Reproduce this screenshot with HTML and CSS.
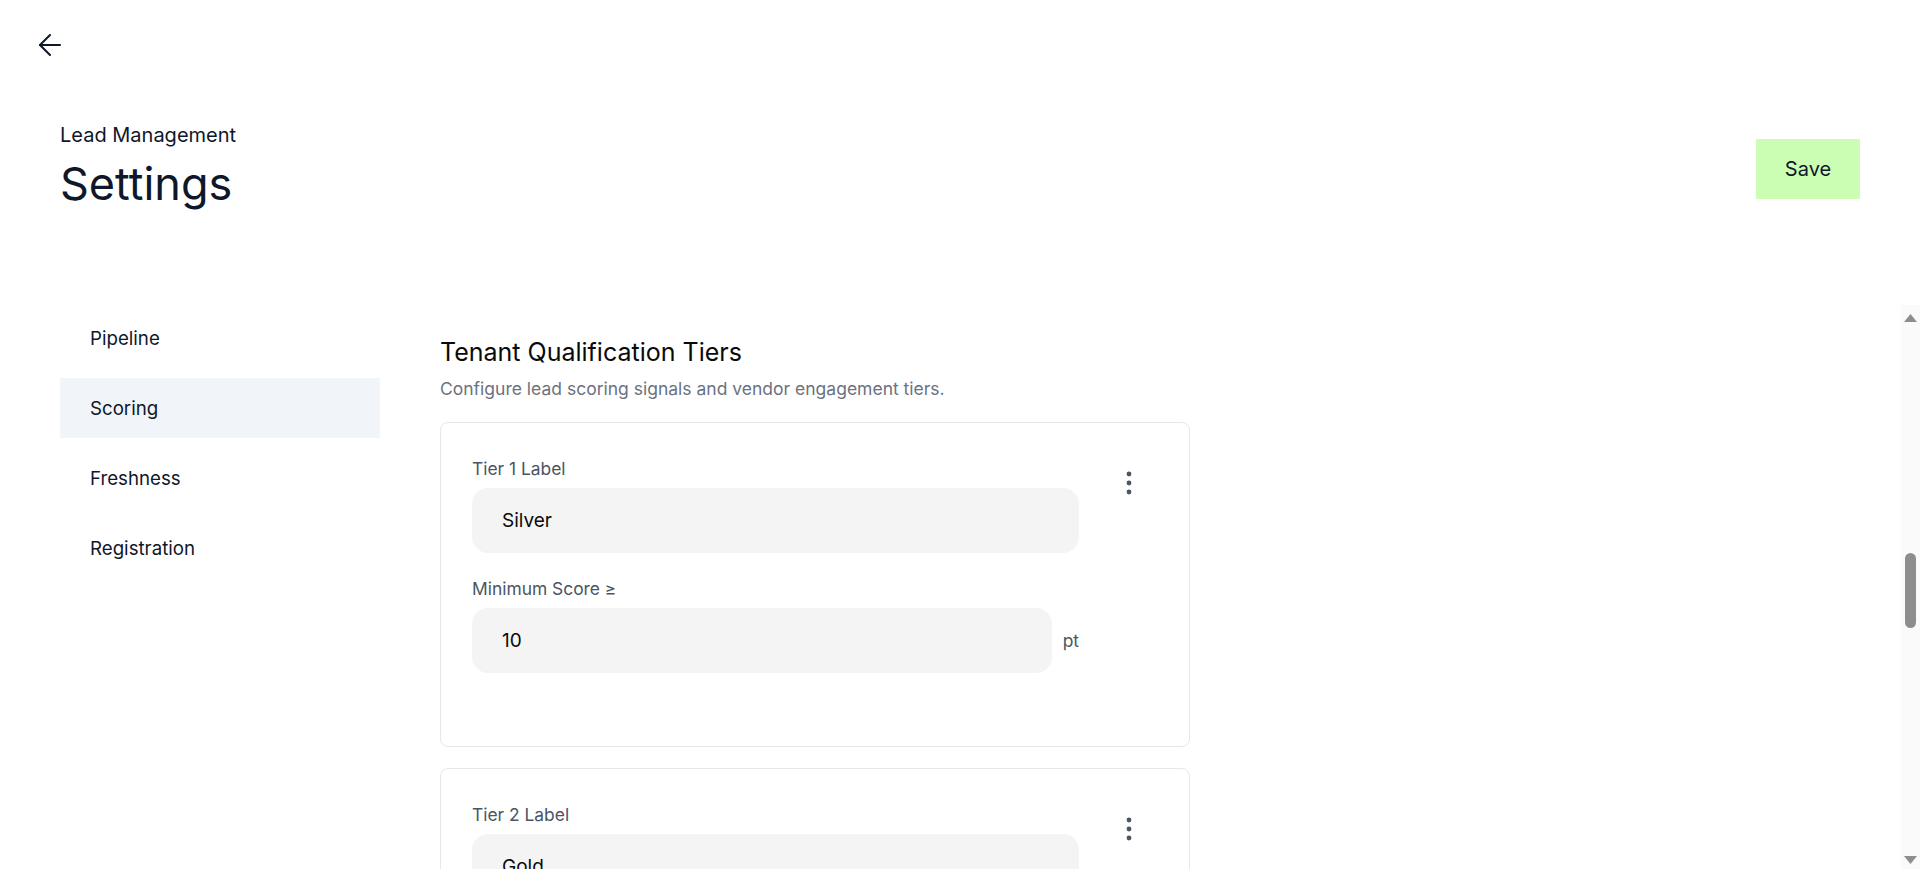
FILE: index.html
```html
<!DOCTYPE html>
<html lang="en">

<head>
    <meta charset="UTF-8">
    <meta name="viewport" content="width=device-width, initial-scale=1.0">
    <title>Settings</title>
    <link rel="stylesheet" href="styles.css">
</head>

<body>
    <div class="page">
        <div class="header">
            <div class="topbar">
                <button class="back">
                    <svg width="22" height="22" viewBox="0 0 22 22" fill="none" stroke="currentColor" stroke-width="2" stroke-linecap="round" stroke-linejoin="round">
                        <path d="M21 11H1"></path>
                        <path d="M11 1L1 11L11 21"></path>
                    </svg>
                </button>
            </div>
            <div class="page-head">
                <div>
                    <div class="crumb">Lead Management</div>
                    <h1 class="title">Settings</h1>
                </div>
                <button class="save">Save</button>
            </div>
        </div>

        <div class="body-row">
            <div class="sidebar">
                <div class="nav-item">Pipeline</div>
                <div class="nav-item active">Scoring</div>
                <div class="nav-item">Freshness</div>
                <div class="nav-item">Registration</div>
            </div>

            <div class="main">
                <div class="section">
                    <h2 class="sec-title">Tenant Qualification Tiers</h2>
                    <p class="sec-desc">Configure lead scoring signals and vendor engagement tiers.</p>
                    <div class="card">
                        <div class="fields">
                            <label class="lbl">Tier 1 Label</label>
                            <input class="txt" type="text" value="Silver">
                            <label class="lbl">Minimum Score ≥</label>
                            <div class="unit-row"><input class="txt" type="text" value="10"><span class="unit">pt</span></div>
                        </div>
                        <button class="more"><svg width="6" height="24" viewBox="0 0 6 24" fill="currentColor"><circle cx="3" cy="3" r="2.4"></circle><circle cx="3" cy="12" r="2.4"></circle><circle cx="3" cy="21" r="2.4"></circle></svg></button>
                    </div>
                    <div class="card">
                        <div class="fields">
                            <label class="lbl">Tier 2 Label</label>
                            <input class="txt" type="text" value="Gold">
                            <label class="lbl">Minimum Score ≥</label>
                            <div class="unit-row"><input class="txt" type="text" value="25"><span class="unit">pt</span></div>
                        </div>
                        <button class="more"><svg width="6" height="24" viewBox="0 0 6 24" fill="currentColor"><circle cx="3" cy="3" r="2.4"></circle><circle cx="3" cy="12" r="2.4"></circle><circle cx="3" cy="21" r="2.4"></circle></svg></button>
                    </div>
                </div>
            </div>

            <!-- custom scroll rail -->
            <div class="rail">
                <div class="rail-btn up"><svg width="13" height="8" viewBox="0 0 13 8"><path d="M6.5 0L13 8H0Z" fill="#8d8d8d"></path></svg></div>
                <div class="thumb"></div>
                <div class="rail-btn down"><svg width="13" height="8" viewBox="0 0 13 8"><path d="M0 0H13L6.5 8Z" fill="#8d8d8d"></path></svg></div>
            </div>
        </div>
    </div>
</body>

</html>
```

FILE: styles.css
```css
*{
    box-sizing: border-box;
}
body{
    margin: 0;
    font-family: Inter, "Noto Sans", sans-serif;
    color: #0f172a;
    background: #fff;
}
.page{
    height: 100vh;
    display: flex;
    flex-direction: column;
}
.header{
    height: 305px;
    flex-shrink: 0;
}
.topbar{
    padding: 34px 0 0 39px;
}
.back{
    border: none;
    background: none;
    padding: 0;
    width: 22px;
    height: 22px;
    color: #0f172a;
    display: block;
}
.page-head{
    display: flex;
    justify-content: space-between;
    align-items: flex-start;
    padding: 0 60px 0 60px;
    margin-top: 65px;
}
.crumb{
    font-size: 20px;
    line-height: 28px;
}
.title{
    font-size: 45px;
    line-height: 48px;
    font-weight: 400;
    margin: 11px 0 0 0;
}
.save{
    width: 104px;
    height: 60px;
    margin-top: 18px;
    border: none;
    background-color: #cbfdb2;
    color: #0f172a;
    font-family: Inter, sans-serif;
    font-size: 20px;
}
.body-row{
    flex: 1;
    min-height: 0;
    display: flex;
    padding-left: 60px;
}
.sidebar{
    width: 320px;
    flex-shrink: 0;
    padding-top: 3px;
    display: flex;
    flex-direction: column;
    gap: 10px;
}
.nav-item{
    height: 60px;
    padding-left: 30px;
    display: flex;
    align-items: center;
    font-size: 18.7px;
}
.nav-item.active{
    background-color: #f1f4f8;
}
.main{
    flex: 1;
    overflow: hidden;
    padding-left: 60px;
}
.section{
    padding-top: 33px;
}
.sec-title{
    margin: 0;
    font-size: 25px;
    line-height: 28px;
    font-weight: 400;
    color: #0a0a0a;
}
.sec-desc{
    margin: 11px 0 21px 0;
    font-size: 17.5px;
    line-height: 24px;
    color: #6b7280;
}
.card{
    width: 750px;
    border: 1px solid #e5e7eb;
    border-radius: 8px;
    padding: 34px 32px 73px 31px;
    margin-bottom: 21px;
    display: flex;
    align-items: flex-start;
}
.fields{
    width: 607px;
    display: flex;
    flex-direction: column;
}
.lbl{
    font-size: 17.4px;
    line-height: 24px;
    color: #4b5563;
    margin-bottom: 7px;
}
.txt{
    height: 65px;
    border: none;
    border-radius: 16px;
    background-color: #f4f4f4;
    padding: 0 30px;
    font-family: Inter, sans-serif;
    font-size: 19px;
    color: #0a0a0a;
    outline: none;
    width: 100%;
}
.fields > .txt,
.fields > .unit-row{
    margin-bottom: 24px;
}
.fields > :last-child{
    margin-bottom: 0;
}
.unit-row{
    display: flex;
    align-items: center;
    gap: 11px;
}
.unit-row .txt{
    flex: 1;
    width: auto;
}
.unit{
    font-size: 17.4px;
    color: #4b5563;
}
.more{
    width: 40px;
    height: 40px;
    margin: 6px 0 0 30px;
    border: none;
    background: none;
    padding: 0;
    color: #4b5563;
    display: flex;
    align-items: center;
    justify-content: center;
}
.rail{
    width: 19px;
    flex-shrink: 0;
    background-color: #fafafa;
    display: flex;
    flex-direction: column;
    align-items: center;
}
.rail-btn{
    height: 18px;
    width: 100%;
    display: flex;
    align-items: center;
    justify-content: center;
}
.rail-btn.up{
    height: 25px;
}
.rail-btn.down{
    margin-top: auto;
}
.thumb{
    width: 11px;
    height: 75px;
    margin-top: 223px;
    border-radius: 6px;
    background-color: #8d8d8d;
}
```
